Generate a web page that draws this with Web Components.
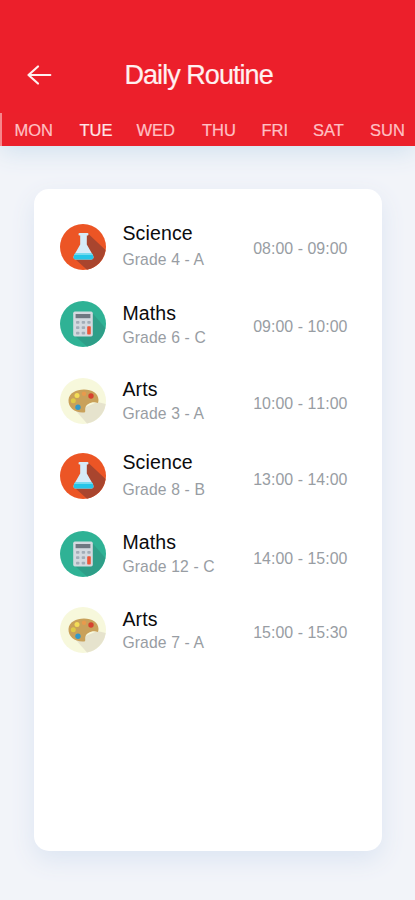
<!DOCTYPE html>
<html lang="en">
<head>
<meta charset="utf-8">
<title>Daily Routine</title>
<style>
html,body{margin:0;height:100%;background:#f2f4f9;overflow:hidden}
body{font-family:"Liberation Sans",Arial,sans-serif}
</style>
</head>
<body>
<routine-app></routine-app>
<script>
const icons = {
  science: `<circle cx="23" cy="23" r="23" fill="#ec5525"/><path d="M28 9.500L45.500 26A23 23 0 0 1 27 45.700L15 35L24 23Z" fill="#a9452e"/><path d="M19.500 9h8q1 0 1 1.300t-1 1.300h-.7V20.500l6.300 11q1.300 4-1.700 4H15.600q-3 0-1.700-4L20.200 20.500v-8.900h-.7q-1 0-1-1.300t1-1.300Z" fill="#d6ebf8"/><path d="M15 29.500h17l1.200 2.500q.9 3.500-1.800 3.500H15.600q-2.700 0-1.800-3.500Z" fill="#25c5e8"/><path d="M15 29.500h17l.7 1.400H14.300Z" fill="#72dbf0"/>`,
  maths: `<circle cx="23" cy="23" r="23" fill="#2fb295"/><path d="M32 11.500L45.300 27A23 23 0 0 1 27 45.500L15 35Z" fill="#2e9e88"/><rect x="13.200" y="10.500" width="19.600" height="25" rx="1.700" fill="#d3d9df"/><rect x="15.600" y="13" width="14.800" height="4.200" fill="#6f7881"/><g fill="#a2adb8"><rect x="16" y="20" width="3.400" height="2.800" rx=".8"/><rect x="21.700" y="20" width="3.400" height="2.800" rx=".8"/><rect x="27.300" y="20" width="3.400" height="2.800" rx=".8"/><rect x="16" y="25.300" width="3.400" height="2.800" rx=".8"/><rect x="21.700" y="25.300" width="3.400" height="2.800" rx=".8"/><rect x="16" y="30.700" width="3.400" height="2.800" rx=".8"/><rect x="21.700" y="30.700" width="3.400" height="2.800" rx=".8"/></g><rect x="27.200" y="25.300" width="3.600" height="8.200" rx=".8" fill="#ee5638"/>`,
  arts: `<circle cx="23" cy="23" r="23" fill="#f7f8dc"/><path d="M16 33L37.500 24L45.700 26A23 23 0 0 1 27 45.600Z" fill="#e6e3cd"/><path d="M8.500 22C9 15 16 11.500 24 11.500S38.500 15.500 38.500 22Q38.500 24 37.800 25C33 23 26 25.500 25.200 30.500C25 33 26 34.500 23.500 34.500C15 35 8 29.500 8.500 22Z" fill="#c9a15a"/><circle cx="17" cy="17.500" r="2.500" fill="#f3dd57"/><circle cx="24" cy="15.700" r="2.200" fill="#e89a4d"/><circle cx="31" cy="18" r="2.700" fill="#d7412f"/><circle cx="13.300" cy="22.700" r="2.500" fill="#dfca45"/><circle cx="18" cy="29.300" r="2.700" fill="#3199c9"/>`
};

function define(name, render) {
  customElements.define(name, class extends HTMLElement {
    connectedCallback() {
      if (this.shadowRoot) return;
      this.attachShadow({ mode: 'open' }).innerHTML = render(this);
    }
  });
}

define('subject-icon', el => `<style>:host{display:block;width:46px;height:46px}svg{display:block}</style>
<svg width="46" height="46" viewBox="0 0 46 46">${icons[el.getAttribute('kind')]}</svg>`);

define('day-tab', () => `<style>
:host{display:block;font-size:16.5px;line-height:20px;color:#ffc0c4;white-space:nowrap;-webkit-text-stroke:.2px currentColor}
:host([selected]){color:#ffe6e7}
</style><slot></slot>`);

define('app-header', () => `<style>
:host{display:flex;flex-direction:column;height:146px;box-sizing:border-box;background:#ec1f2b;box-shadow:0 5px 24px #cfe0ee;padding-top:57px}
.bar{display:grid;grid-template-columns:98.500px 1fr;padding-left:26px;height:56px}
svg{display:block;margin-top:7px}
h1{margin:0;font-weight:400;font-size:27px;line-height:36px;letter-spacing:-.95px;color:#fff0f0;white-space:nowrap;-webkit-text-stroke:.2px currentColor}
nav{display:grid;grid-template-columns:65px 57px 65.500px 59.500px 51.500px 57px 1fr;height:33px;box-sizing:border-box;padding:7px 0 0 12.500px;border-left:2px solid #f6868c;background:#eb202b}
</style>
<div class="bar"><svg width="26" height="22" viewBox="0 0 26 22" fill="none" stroke="#fff0f0" stroke-width="2.200" stroke-linecap="round" stroke-linejoin="round"><path d="M24.300 11H2.500M12 2.500L2.500 11L12 19.500"/></svg><h1><slot name="title"></slot></h1></div>
<nav><slot></slot></nav>`);

define('lesson-row', el => `<style>
:host{display:grid;grid-template-columns:62.400px 1fr auto;align-items:start;height:var(--pitch);white-space:nowrap}
.name{font-size:19.500px;line-height:24px;letter-spacing:.15px;color:#0b0b0d;margin-top:var(--name)}
.grade{font-size:15.700px;line-height:20px;letter-spacing:.14px;color:#989da3;margin-top:var(--gap)}
.time{font-size:15.900px;line-height:20px;letter-spacing:.05px;font-kerning:none;color:#989da3;margin-top:var(--time)}
</style>
<subject-icon kind="${el.getAttribute('kind')}"></subject-icon>
<div><div class="name"><slot></slot></div><div class="grade"><slot name="grade"></slot></div></div>
<div class="time"><slot name="time"></slot></div>`);

define('routine-card', () => `<style>
:host{display:block;box-sizing:border-box;margin:43px 33px 0 34px;height:662px;padding:35px 34.500px 0 26px;border-radius:15px;background:#fff;box-shadow:0 9px 24px #dce5f2}
</style><slot></slot>`);

const days = ['MON','TUE','WED','THU','FRI','SAT','SUN'];
const lessons = [
  ['science','Science','Grade 4 - A','08:00 - 09:00',77,-3,5,15],
  ['maths','Maths','Grade 6 - C','09:00 - 10:00',77,0,3,16],
  ['arts','Arts','Grade 3 - A','10:00 - 11:00',75,-1,3,16],
  ['science','Science','Grade 8 - B','13:00 - 14:00',78,-3,6,17],
  ['maths','Maths','Grade 12 - C','14:00 - 15:00',76,-1,3,18],
  ['arts','Arts','Grade 7 - A','15:00 - 15:30',76,0,2,16]
];
define('routine-app', () => `<style>:host{display:block;height:900px;background:#f2f4f9}</style>
<app-header><span slot="title">Daily Routine</span>${days.map(d => `<day-tab${d === 'TUE' ? ' selected' : ''}>${d}</day-tab>`).join('')}</app-header>
<routine-card>${lessons.map(([k,n,g,t,p,m,gap,tm]) => `<lesson-row kind="${k}" style="--pitch:${p}px;--name:${m}px;--gap:${gap}px;--time:${tm}px">${n}<span slot="grade">${g}</span><span slot="time">${t}</span></lesson-row>`).join('')}</routine-card>`);
</script>
</body>
</html>
